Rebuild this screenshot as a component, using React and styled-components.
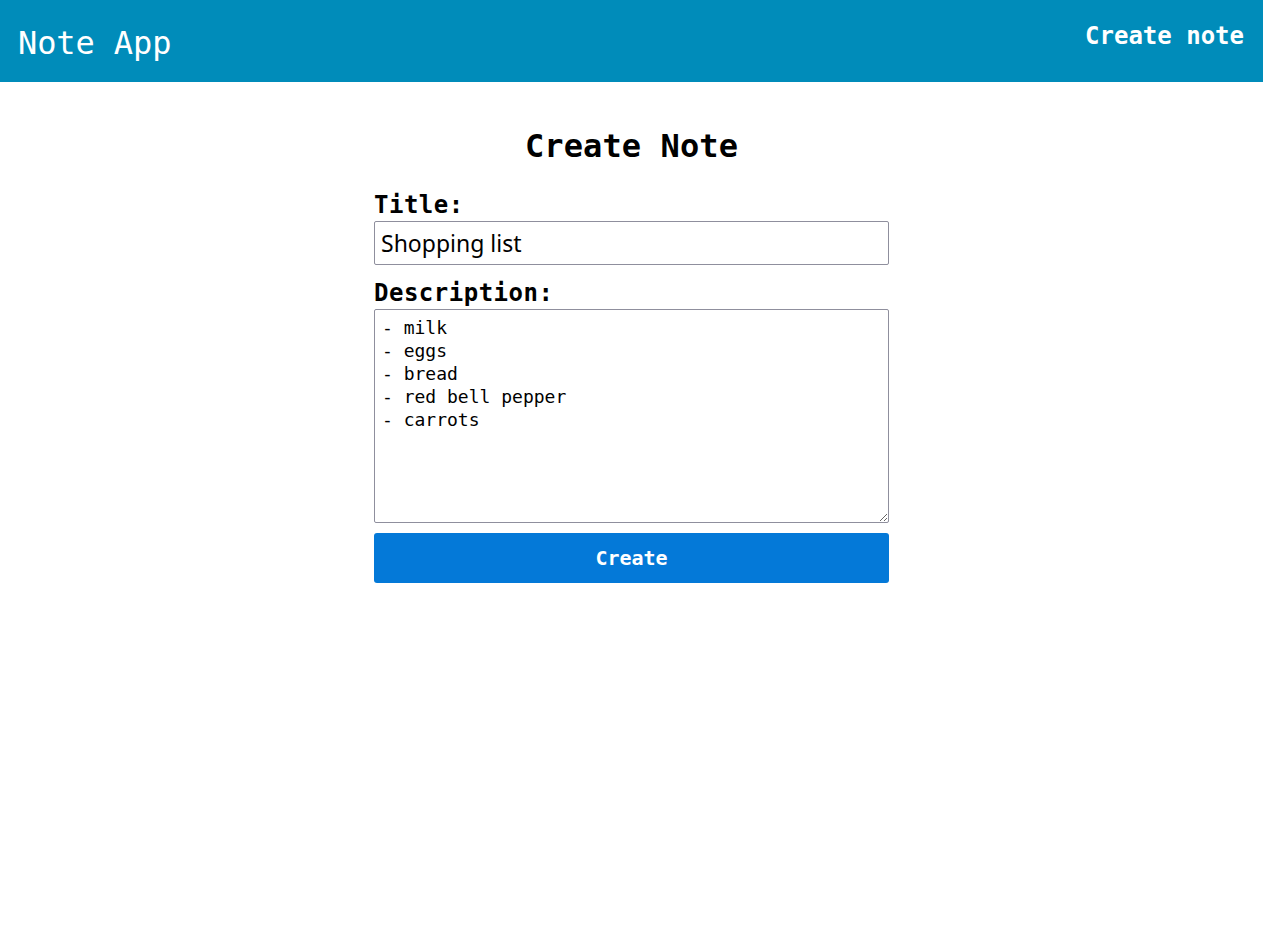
import React, { useState } from "react";
import styled, { createGlobalStyle } from "styled-components";

const Global = createGlobalStyle`
  html, body { margin: 0; padding: 0; background: #fff; }
  body { font-family: "DejaVu Sans Mono", "Liberation Mono", monospace; color: #000; }
  * { box-sizing: border-box; }
`;

const Header = styled.header`
  height: 82px;
  background: #008cba;
  display: flex;
  justify-content: space-between;
  align-items: flex-start;
  padding: 0 19px 0 18px;
  color: #fff;
`;

const Brand = styled.h1`
  margin: 0;
  padding-top: 23px;
  font-size: 32px;
  line-height: 40px;
  font-weight: 500;
  letter-spacing: -0.1px;
`;

const NavLink = styled.a`
  padding-top: 20px;
  font-size: 24px;
  line-height: 32px;
  font-weight: 700;
  color: #fff;
  text-decoration: none;
  letter-spacing: 0;
  cursor: pointer;
`;

const Main = styled.main`
  display: flex;
  flex-direction: column;
  align-items: center;
  padding-top: 44px;
`;

const Title = styled.h2`
  margin: 0;
  font-size: 32px;
  line-height: 40px;
  font-weight: 700;
  letter-spacing: 0.1px;
`;

const Form = styled.form`
  width: 515px;
  display: flex;
  flex-direction: column;
  margin-top: 24px;
`;

const Label = styled.label`
  font-size: 24px;
  line-height: 31px;
  font-weight: 700;
  letter-spacing: 0.5px;
  display: block;
  margin-top: ${(p) => p.$gap || 0}px;
`;

const Input = styled.input`
  width: 100%;
  height: 44px;
  border: 1px solid #8f8f9d;
  border-radius: 2px;
  padding: 0 6px;
  font-family: "Noto Sans", "Open Sans", sans-serif;
  font-size: 23px;
  color: #000;
  outline: none;
`;

const TextArea = styled.textarea`
  width: 100%;
  height: 214px;
  border: 1px solid #8f8f9d;
  border-radius: 2px;
  padding: 6px 7px;
  font-family: "DejaVu Sans Mono", "Liberation Mono", monospace;
  font-size: 18px;
  line-height: 23px;
  color: #000;
  resize: both;
  outline: none;
  display: block;
`;

const Button = styled.button`
  margin-top: 10px;
  width: 100%;
  height: 50px;
  border: none;
  border-radius: 3px;
  background: #0479d8;
  color: #fff;
  font-family: "DejaVu Sans Mono", "Liberation Mono", monospace;
  font-size: 20px;
  font-weight: 700;
  cursor: pointer;
`;

export default function App() {
  const [title, setTitle] = useState("Shopping list");
  const [desc, setDesc] = useState(
    "- milk\n- eggs\n- bread\n- red bell pepper\n- carrots"
  );
  return (
    <>
      <Global />
      <Header>
        <Brand>Note App</Brand>
        <NavLink>Create note</NavLink>
      </Header>
      <Main>
        <Title>Create Note</Title>
        <Form onSubmit={(e) => e.preventDefault()}>
          <Label htmlFor="t">Title:</Label>
          <Input id="t" value={title} onChange={(e) => setTitle(e.target.value)} />
          <Label htmlFor="d" $gap={13}>Description:</Label>
          <TextArea id="d" value={desc} onChange={(e) => setDesc(e.target.value)} />
          <Button type="submit">Create</Button>
        </Form>
      </Main>
    </>
  );
}
